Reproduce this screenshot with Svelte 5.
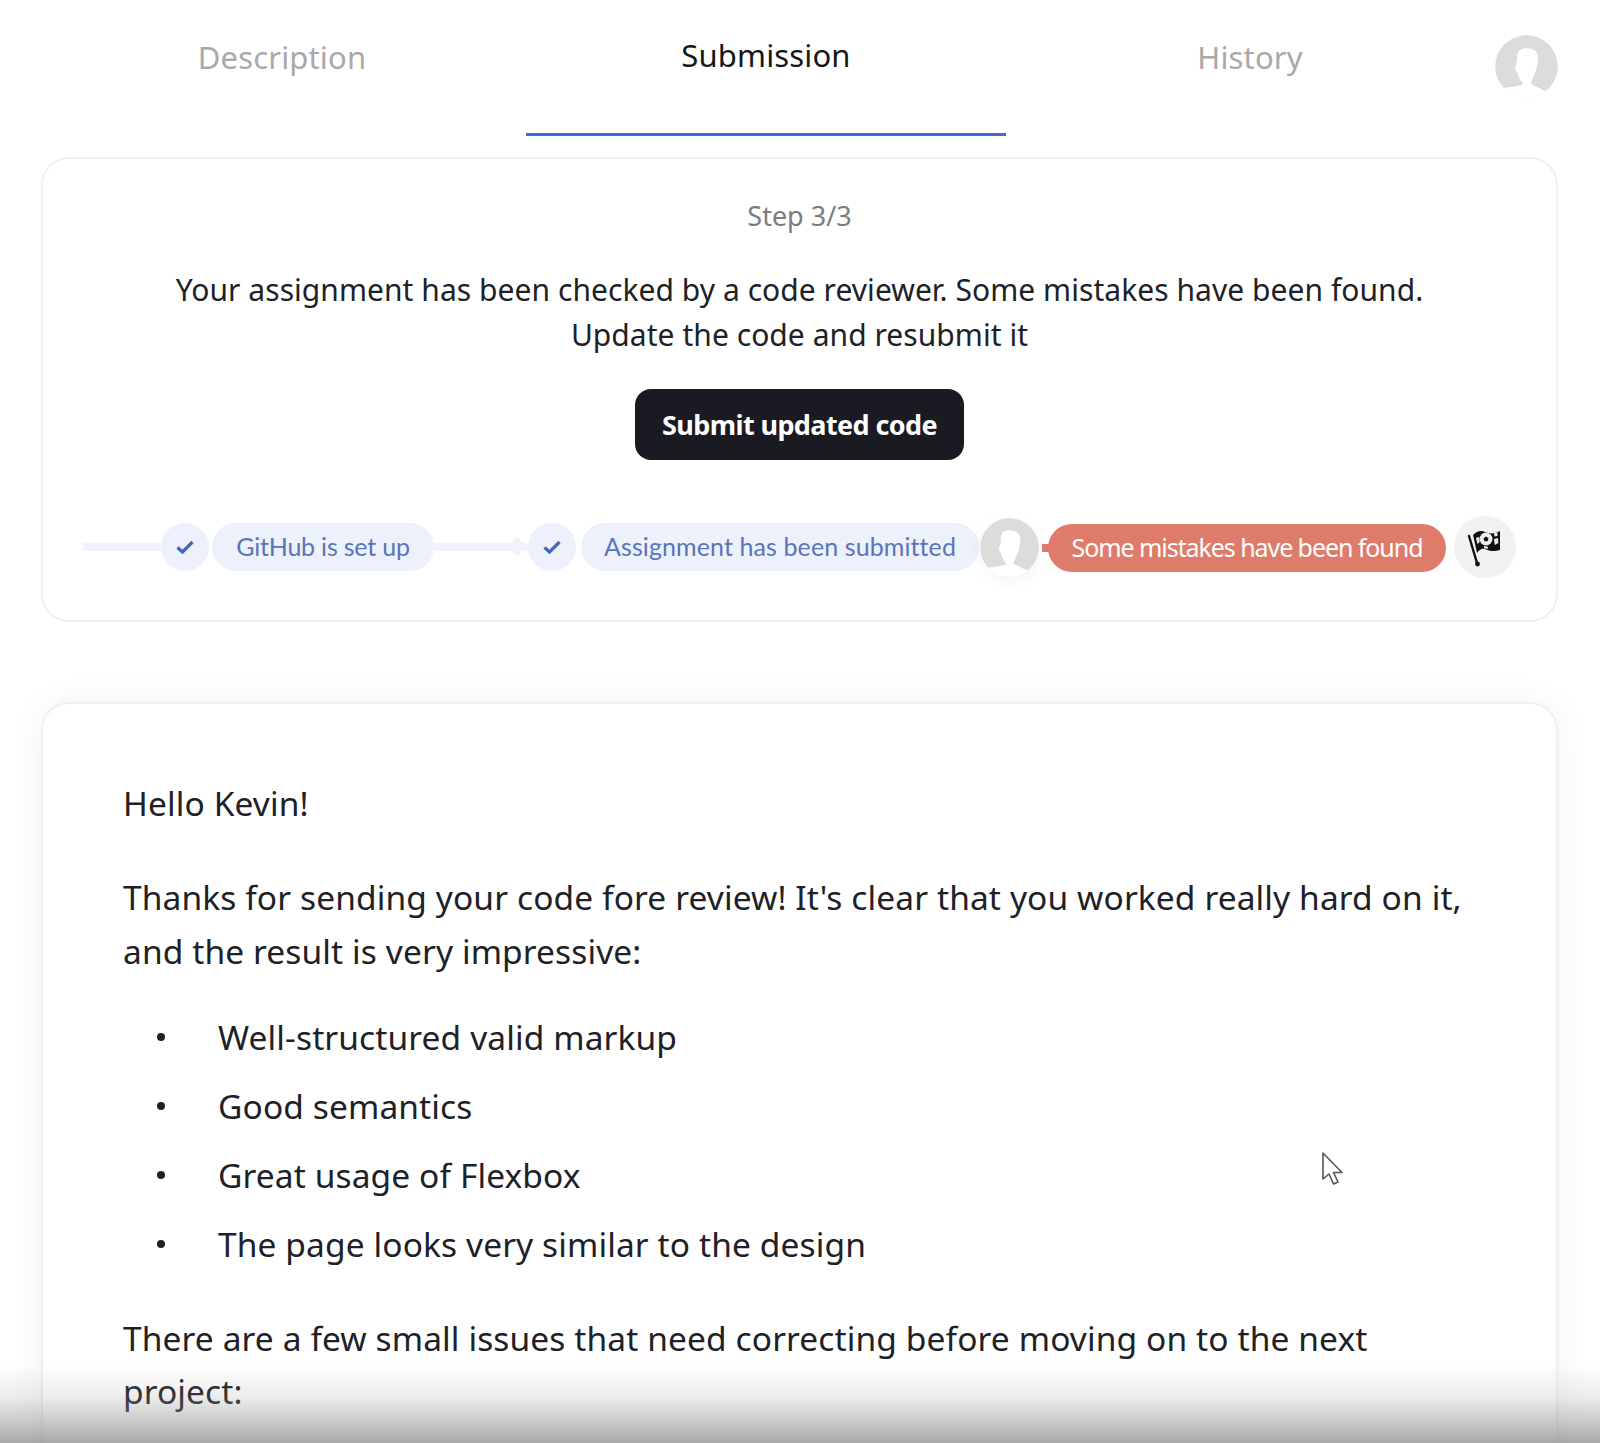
<script lang="ts">
    const tabs = [
        { label: 'Description', active: false },
        { label: 'Submission', active: true },
        { label: 'History', active: false }
    ]

    const praise = [
        'Well-structured valid markup',
        'Good semantics',
        'Great usage of Flexbox',
        'The page looks very similar to the design'
    ]
</script>

{#snippet silhouette(size)}
    <svg class="avatar-img" width={size} height={size} viewBox="0 0 62 62" aria-hidden="true">
        <circle cx="31" cy="31" r="31" fill="#dcdcdc"/>
        <path fill="#fff" d="M31 13C24 13 21 17 22 24L20 32C20 35 21 36 22 37 23 42 25 45 27 47V49C22 50 14 52 6 52V64H56L51 56 35 48C37 42 40 37 41 32 43 25 43 19 40 16 38 14 35 13 31 13Z"/>
    </svg>
{/snippet}

{#snippet check()}
    <span class="step-dot">
        <svg width="20" height="16" viewBox="0 0 20 16" aria-hidden="true">
            <path d="M2.500 8.500 7.500 13 17.500 3" fill="none" stroke="#4467b5" stroke-width="3.200"/>
        </svg>
    </span>
{/snippet}

<div class="page">
    <nav class="tabs">
        {#each tabs as tab}
            <div class="tab" class:tab-active={tab.active}>{tab.label}</div>
        {/each}
        <div class="tabs-avatar">{@render silhouette(63)}</div>
    </nav>

    <section class="card status">
        <div class="step-count">Step 3/3</div>
        <p class="status-text">
            Your assignment has been checked by a code reviewer. Some mistakes have been found.<br />
            Update the code and resubmit it
        </p>
        <button class="submit" type="button">Submit updated code</button>

        <div class="stepper">
            <span class="line line-first"></span>
            {@render check()}
            <span class="pill pill-done pill-github">GitHub is set up</span>
            <span class="line line-mid"></span>
            {@render check()}
            <span class="pill pill-done pill-submitted">Assignment has been submitted</span>
            <span class="stepper-avatar">{@render silhouette(59)}</span>
            <span class="pill pill-error">Some mistakes have been found</span>
            <span class="finish">
                <svg width="36" height="44" viewBox="0 0 36 44" aria-hidden="true">
                    <path d="M2 11 10 38" stroke="#111" stroke-width="2.400" stroke-linecap="round" fill="none"/>
                    <circle cx="10.500" cy="39" r="2.400" fill="#111"/>
                    <path fill="#111" d="M6 10C10 6 14 5 18 7 23 9 28 9 33 6V25C27 27 22 26 18 24 15 23 12 25 10 28Z"/>
                    <circle cx="19" cy="14" r="6.500" fill="#eee"/>
                    <path fill="#111" d="M19 11.500l2.500 1.800-1 2.900h-3l-1-2.900z"/>
                    <path fill="#eee" d="M9 13l3-1 .8 5-2.400 2zM27 14l4-1 .4 5-3.600 2zM27 8l3.500-.5v3.500l-3 .5zM17 21l4 .8-.5 2.200-3.500-1z"/>
                </svg>
            </span>
        </div>
    </section>

    <section class="card review">
        <p>Hello Kevin!</p>
        <p>Thanks for sending your code fore review! It's clear that you worked really hard on it, and the result is very impressive:</p>
        <ul>
            {#each praise as item}
                <li>{item}</li>
            {/each}
        </ul>
        <p>There are a few small issues that need correcting before moving on to the next project:</p>
    </section>

    <svg class="cursor" width="24" height="36" viewBox="0 0 24 36" aria-hidden="true">
        <path d="M2 2v26l6-5 4.500 10 4.500-2-4.500-9.500H21z" fill="#fff" stroke="#555" stroke-width="1.600" stroke-linejoin="round"/>
    </svg>
    <div class="fade"></div>
</div>

<style>
    :global(body) {
        margin: 0;
        background: #fff;
    }

    .page {
        position: relative;
        height: 1443px;
        overflow: hidden;
        font-family: "Noto Sans", "Open Sans", sans-serif;
        color: #202127;
        background: #fff;
    }

    .tabs {
        display: flex;
        align-items: flex-start;
        gap: 4px;
        height: 157px;
        padding: 0 42px 0 46px;
        box-sizing: border-box;
    }

    .tab {
        flex: 0 0 480px;
        box-sizing: border-box;
        height: 136px;
        padding-top: 35px;
        text-align: center;
        font-size: 31px;
        line-height: 44px;
        letter-spacing: 0.15px;
        color: #a9a9a9;
    }

    .tab:first-child {
        margin-left: -4px;
    }

    .tab-active {
        padding-top: 33px;
        color: #15161a;
        border-bottom: 3px solid #3a6fd0;
    }

    .tabs-avatar {
        margin-left: auto;
        padding-top: 35px;
    }

    .avatar-img {
        display: block;
        border-radius: 50%;
    }

    .card {
        margin: 0 42px 0 41px;
        border: 2px solid #f0f0f0;
        border-radius: 28px;
        box-sizing: border-box;
        background: #fff;
    }

    .status {
        height: 465px;
        padding-top: 35px;
        text-align: center;
    }

    .step-count {
        font-size: 27px;
        line-height: 44px;
        color: #7d7d7d;
    }

    .status-text {
        margin: 29px 0 0;
        font-size: 30px;
        line-height: 45px;
        letter-spacing: 0.05px;
    }

    .submit {
        display: block;
        width: 329px;
        height: 71px;
        margin: 32px auto 0;
        border: none;
        border-radius: 16px;
        background: #1a1b22;
        color: #fff;
        font-family: inherit;
        font-size: 27px;
        font-weight: 700;
        letter-spacing: -0.6px;
    }

    .stepper {
        display: flex;
        align-items: center;
        margin-top: 56px;
        padding-left: 40px;
        font-family: Lato, "Noto Sans", sans-serif;
    }

    .line {
        height: 8px;
        background: #f0f3fb;
    }

    .line-first {
        width: 78px;
    }

    .line-mid {
        position: relative;
        width: 94px;
    }

    .line-mid::after {
        content: "";
        position: absolute;
        right: 4px;
        top: -3px;
        width: 14px;
        height: 14px;
        background: #f0f3fb;
        transform: rotate(45deg);
    }

    .step-dot {
        flex: none;
        display: flex;
        align-items: center;
        justify-content: center;
        width: 48px;
        height: 48px;
        border-radius: 50%;
        background: #edf1fc;
    }

    .pill {
        flex: none;
        box-sizing: border-box;
        height: 48px;
        border-radius: 24px;
        line-height: 46px;
        text-align: center;
        font-size: 25px;
    }

    .pill-done {
        background: #edf1fc;
        color: #5a75b8;
    }

    .pill-github {
        width: 222px;
        margin-left: 3px;
        letter-spacing: -0.2px;
    }

    .pill-submitted {
        width: 398px;
        margin-left: 5px;
        letter-spacing: 0.1px;
    }

    .stepper-avatar {
        flex: none;
        margin-left: 1px;
        border-radius: 50%;
        box-shadow: 0 4px 16px rgba(0, 0, 0, 0.05);
    }

    .pill-error {
        position: relative;
        top: 1px;
        width: 398px;
        margin-left: 9px;
        background: #df7b6a;
        color: #fff;
        font-family: "Noto Sans", sans-serif;
        letter-spacing: -1.07px;
    }

    .pill-error::before {
        content: "";
        position: absolute;
        left: -6px;
        top: 20px;
        width: 8px;
        height: 8px;
        background: #df7b6a;
    }

    .finish {
        flex: none;
        display: flex;
        align-items: center;
        justify-content: center;
        width: 62px;
        height: 62px;
        margin-left: 8px;
        border-radius: 50%;
        background: #f2f2f2;
    }

    .review {
        margin-top: 80px;
        height: 900px;
        padding: 72px 80px 0;
        font-size: 33.500px;
        line-height: 54px;
        letter-spacing: 0.11px;
        box-shadow: 0 0 34px rgba(0, 0, 0, 0.06);
    }

    .review p {
        margin: 0;
    }

    .review p + p {
        margin-top: 40px;
    }

    .review ul {
        margin: 32px 0 41px;
        padding: 0 0 0 34px;
        list-style: none;
    }

    .review ul + p {
        margin-top: 0;
        line-height: 53px;
    }

    .review li {
        display: flex;
        align-items: center;
        margin-bottom: 15px;
    }

    .review li::before {
        content: "";
        flex: none;
        width: 8px;
        height: 8px;
        margin-right: 53px;
        border-radius: 50%;
        background: #202127;
    }

    .review li:last-child {
        margin-bottom: 0;
    }

    .cursor {
        position: absolute;
        left: 1321px;
        top: 1151px;
    }

    .fade {
        position: absolute;
        left: 0;
        right: 0;
        bottom: 0;
        height: 80px;
        background: linear-gradient(to bottom, rgba(150, 150, 150, 0), rgba(150, 150, 150, 0.16) 40%, rgba(150, 150, 150, 0.52) 75%, rgba(150, 150, 150, 0.82));
        pointer-events: none;
    }
</style>
